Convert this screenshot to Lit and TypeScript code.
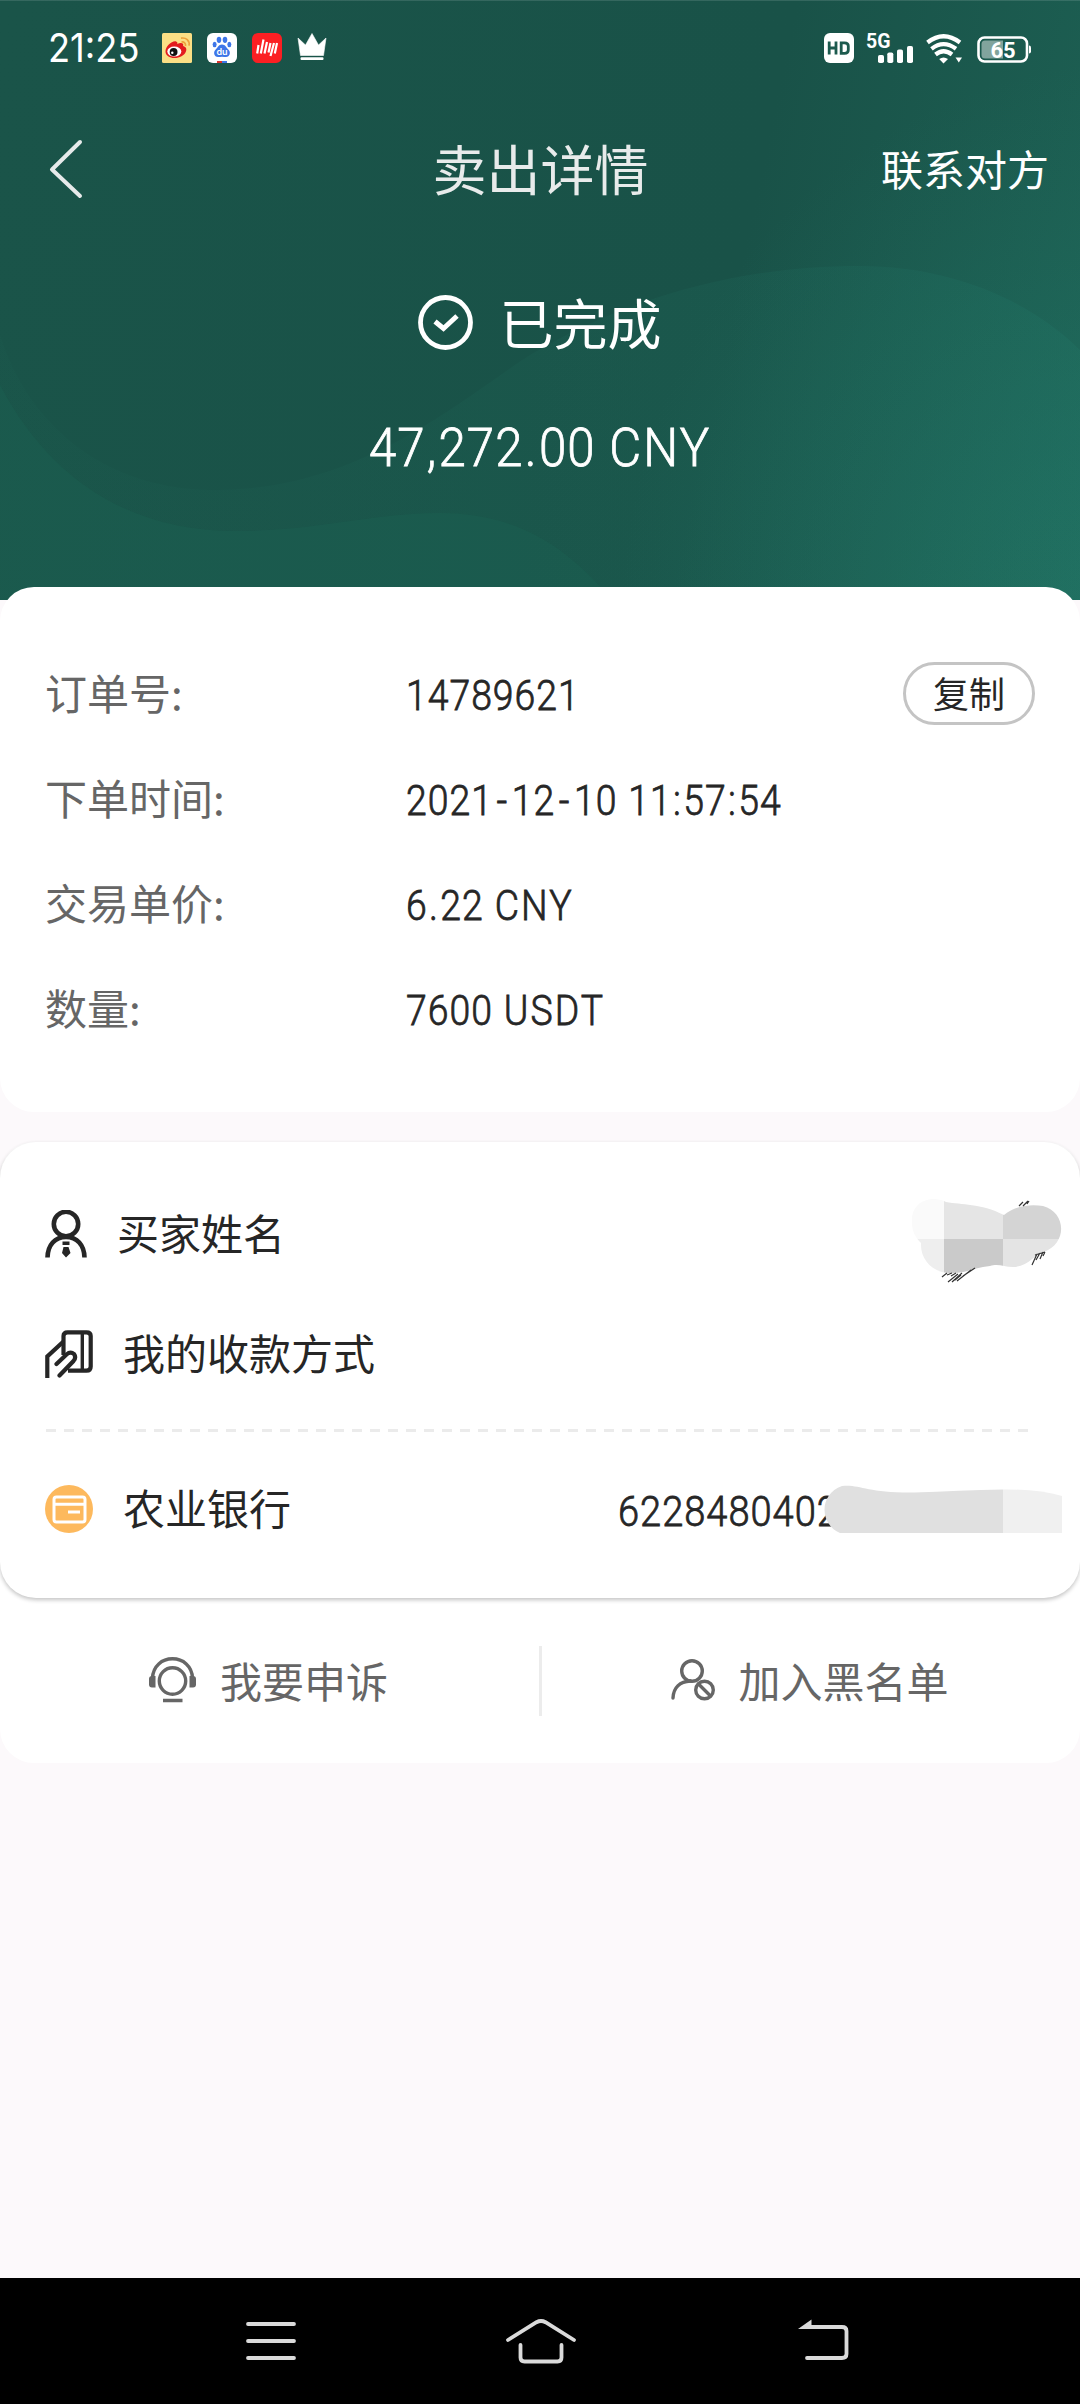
import { LitElement, html, css, svg } from "lit";
import { customElement, property } from "lit/decorators.js";

interface DetailRow {
  label: string;
  value: string;
  copy?: boolean;
}

const ROWS: DetailRow[] = [
  { label: "订单号:", value: "14789621", copy: true },
  { label: "下单时间:", value: "2021-12-10 11:57:54" },
  { label: "交易单价:", value: "6.22 CNY" },
  { label: "数量:", value: "7600 USDT" },
];

@customElement("status-bar")
class StatusBar extends LitElement {
  static styles = css`
    :host { display: block; }
    svg { display: block; flex: none; overflow: visible; }
    .bar {
      display: flex; justify-content: space-between; align-items: center;
      height: 96px; padding: 0 48px 0 48px; box-sizing: border-box;
    }
    .side { display: flex; align-items: center; }
    .apps { display: flex; gap: 15px; margin-left: 21px; }
    .time {
      font: 400 39px/40px Inter, Roboto, sans-serif; color: #fff; width: 93px;
      white-space: nowrap;
    }
    .time-text { display: inline-block; transform: scaleX(0.93); transform-origin: 0 50%; }
    .signal { margin-left: 12px; }
    .wifi { margin-left: 12px; }
    .battery { margin-left: 15px; }
  `;
  render() {
    return html`<div class="bar">
      <div class="side">
        <div class="time"><span class="time-text">21:25</span></div>
        <div class="apps">
          <svg width="30" height="30" viewBox="0 0 30 30">
            <rect width="30" height="30" rx="1.5" fill="#fbdf85" />
            <path d="M3.5 18.5C3.5 13 10 7.5 14 8.4c1.600.4 1.500 1.600 1.300 2.500 2.500-1.400 7-1.700 5.800 2 3.300 1 3.800 3 2.800 5.600C22.500 22.500 17.500 25 12.500 25 7.500 25 3.500 22.400 3.500 18.500Z" fill="#e31b1e" />
            <ellipse cx="12.300" cy="18.600" rx="7" ry="5" fill="#fff" />
            <circle cx="11.600" cy="19" r="3.900" fill="#111" />
            <circle cx="10.300" cy="19.800" r="1.200" fill="#fff" />
            <path d="M19.500 9c2.500-.5 4.500 1.200 4 4M19 5.200c5-1 9 2.500 8 7.500" fill="none" stroke="#eda13a" stroke-width="1.700" />
          </svg>
          <svg width="30" height="30" viewBox="0 0 30 30">
            <rect width="30" height="30" rx="6" fill="#fff" />
            <g fill="#3d76e8">
              <ellipse cx="12" cy="6.800" rx="2.300" ry="3.100" />
              <ellipse cx="18" cy="6.800" rx="2.300" ry="3.100" />
              <ellipse cx="7.600" cy="11.500" rx="2" ry="2.700" />
              <ellipse cx="22.300" cy="11.500" rx="2" ry="2.700" />
              <path d="M15 11.500c3.500 0 4 3 6.500 5.200 2.500 2.300 1.500 7.300-2.500 7.300-1.500 0-2.500-.3-4-.3s-2.500.3-4 .3c-4 0-5-5-2.500-7.300C11 14.500 11.500 11.500 15 11.500Z" />
            </g>
            <text x="15" y="22.300" text-anchor="middle" font-family="Inter,sans-serif" font-weight="600" font-size="9" fill="#fff">du</text>
            <path d="M10 28h5v2h-5z" fill="#d8332d" /><path d="M15 28h5v2h-5z" fill="#3d76e8" />
          </svg>
          <svg width="30" height="30" viewBox="0 0 30 30">
            <rect width="30" height="30" rx="6" fill="#fb1f23" />
            <path d="M6.500 12 5.200 20.500M11.500 6.500 8.800 20.500M15 9 12.500 20.500M18.500 10 16.500 19.500M18.800 19.500h1.500M22 10 18.500 23M25 10 22.800 20.500" stroke="#fff" stroke-width="2.200" fill="none" />
          </svg>
          <svg width="30" height="30" viewBox="0 0 30 30" fill="#fff">
            <path d="M1 5 8.500 12 15 .5 21.500 12 29 5 26.500 22.500h-23Z" stroke="#fff" stroke-width=".6" stroke-linejoin="round" />
            <rect x="3.500" y="24.300" width="23" height="2.800" rx="1" />
          </svg>
        </div>
      </div>
      <div class="side">
        <svg width="30" height="30" viewBox="0 0 30 30">
          <rect width="30" height="30" rx="6" fill="#fff" />
          <path d="M5.200 8.500v13M12 8.500v13M5.200 15H12M17.200 9.800v10.500h3.300q3.800 0 3.800-3.300v-4q0-3.200-3.800-3.200Z" fill="none" stroke="#1c5a4e" stroke-width="2.800" />
        </svg>
        <svg class="signal" width="48" height="30" viewBox="0 0 48 30" fill="#fff">
          <text x="0" y="14.800" font-family="Roboto,sans-serif" font-weight="700" font-size="19.500">5G</text>
          <rect x="12" y="22" width="6" height="8" rx="1.800" /><rect x="21.300" y="19.500" width="6" height="10.500" rx="1.800" />
          <rect x="31" y="16.500" width="6" height="13.500" rx="1.800" /><rect x="41" y="13" width="6" height="17" rx="1.800" />
        </svg>
        <svg class="wifi" width="36" height="30" viewBox="0 0 36 30" fill="none" stroke="#fff" stroke-width="4.200">
          <path d="M1.500 9.500Q17.500-3 34 9.500M5.500 15.800Q17.500 6.500 30 15.800M9.500 21.500Q17.500 15 26 21.500" />
          <path d="M13.200 26Q17.500 22.800 22 26L17.500 30.500Z" fill="#fff" stroke="none" />
          <path d="M29.500 24.500h6.500L32.800 29.500Z" fill="#fff" stroke="none" />
        </svg>
        <svg class="battery" width="55" height="30" viewBox="0 0 55 30">
          <rect x="1.500" y="4.500" width="48.500" height="24" rx="6" fill="none" stroke="#fff" stroke-width="2.600" />
          <path d="M8 7.500h18v18H8q-3.500 0-3.500-3.500V11q0-3.500 3.500-3.500Z" fill="#fff" opacity=".45" />
          <path d="M52 12.500q2 0 2 2v4q0 2-2 2Z" fill="#fff" />
          <text x="26" y="24.500" text-anchor="middle" font-family="Roboto,sans-serif" font-weight="700" font-size="22" fill="#fff">65</text>
        </svg>
      </div>
    </div>`;
  }
}

/** Narrow figures with widened punctuation and capitals. */
@customElement("din-text")
class DinText extends LitElement {
  @property() text = "";
  static styles = css`
    :host { display: block; font-family: Roboto, "Liberation Sans", sans-serif; font-weight: 300; white-space: pre; }
    .t {
      display: inline-block; transform: scaleX(var(--sx, 0.89)); transform-origin: var(--ox, 0) 50%;
      letter-spacing: 1.1px; word-spacing: 1px; -webkit-text-stroke: 0.8px currentColor;
    }
    .hyphen { margin: 0 4px; }
    .dot { margin: 0 1.500px; }
    .caps { letter-spacing: 2.300px; }
  `;
  private piece(p: string) {
    if (p === "-") return html`<span class="hyphen">-</span>`;
    if (/^[:.,]$/.test(p)) return html`<span class="dot">${p}</span>`;
    if (/^[A-Z]+$/.test(p)) return html`<span class="caps">${p}</span>`;
    return p;
  }
  render() {
    return html`<span class="t">${this.text.split(/([-:.,]|[A-Z]+)/).map((p) => this.piece(p))}</span>`;
  }
}

@customElement("app-root")
class AppRoot extends LitElement {
  static styles = css`
    :host {
      display: block; width: 1080px; height: 2404px; overflow: hidden;
      background: #fcf9fb; color: #262626;
      font-family: "Noto Sans CJK SC", "Noto Sans", sans-serif;
    }
    svg { display: block; flex: none; }
    .screen { display: flex; flex-direction: column; height: 2404px; }
    .hero {
      height: 600px; flex: none; color: #fff; position: relative;
      background:
        radial-gradient(ellipse 520px 560px at 1140px 620px, rgba(36, 126, 109, 0.46), rgba(36, 126, 109, 0) 100%),
        linear-gradient(102deg, #1a5449 0%, #195248 66%, #1d6154 100%);
    }
    .waves { position: absolute; inset: 0; }
    .front { position: relative; }
    .nav {
      display: grid; grid-template-columns: 1fr auto 1fr; align-items: center;
      height: 146px; padding: 0 31px 0 48px;
    }
    .title { font-size: 54px; line-height: 60px; color: #e8ebeb; margin-left: -16px; padding-bottom: 2px; }
    .contact { font-size: 42px; line-height: 50px; text-align: right; padding-bottom: 3px; }
    .state { display: flex; justify-content: center; align-items: center; gap: 27px; margin-top: 45px; height: 70px; padding-right: 1px; }
    .state-text { font-size: 54px; line-height: 60px; }
    .amount { text-align: center; font-size: 54px; line-height: 60px; margin-top: 61px; --ox: 50%; --sx: 0.91; }
    .card { background: #fff; flex: none; }
    .info { border-radius: 34px; margin-top: -13px; height: 525px; box-sizing: border-box; padding: 56px 45px 0; position: relative; }
    .row { display: grid; grid-template-columns: 361px 1fr auto; height: 105px; align-items: center; font-size: 42px; line-height: 50px; }
    .label { color: #666; padding-bottom: 7px; }
    .copy {
      border: 3px solid #c4c4c4; border-radius: 32px; width: 132px; height: 63px; box-sizing: border-box;
      font-size: 36px; line-height: 54px; text-align: center; margin-bottom: 4px;
    }
    .pay-wrap { border-radius: 34px; margin-top: 30px; height: 621px; }
    .pay {
      border-radius: 36px; height: 456px; box-sizing: border-box; padding: 32px 18px 0 45px;
      box-shadow: 0 2px 4px rgba(0, 0, 0, 0.24);
    }
    .item { display: flex; align-items: center; height: 120px; font-size: 42px; line-height: 50px; }
    .name { margin-left: 30px; padding-bottom: 4px; }
    .push { margin-left: auto; margin-top: 12px; }
    .dash {
      height: 3px; margin: 15px 34px 0 1px;
      background: repeating-linear-gradient(90deg, #ebebeb 0 10px, transparent 10px 18px);
    }
    .bank { margin-top: 17px; }
    .acct { margin-left: auto; width: 444px; display: flex; align-items: center; }
    .acct-no { width: 206px; flex: none; padding-top: 5px; --sx: 0.905; }
    .cover { position: relative; }
    .actions { display: grid; grid-template-columns: 1fr 3px 1fr; align-items: center; height: 165px; }
    .act { display: flex; align-items: center; color: #666; font-size: 42px; line-height: 50px; padding-bottom: 2px; }
    .first { padding-left: 148px; gap: 23px; }
    .second { padding-left: 129px; gap: 23px; }
    .split { background: #ececec; height: 70px; }
    .sysnav { margin-top: auto; height: 126px; background: #000; flex: none; display: flex; align-items: center; padding: 0 230px 0 245px; }
    .home { margin-left: 208px; }
    .back { margin-left: auto; }
  `;

  private waves() {
    return svg`<svg class="waves" width="1080" height="600" viewBox="0 0 1080 600">
      <defs><linearGradient id="wv" x1="0" y1="0" x2="1" y2="0">
        <stop offset="0" stop-color="#22705f" stop-opacity=".06"/><stop offset=".5" stop-color="#22705f" stop-opacity=".14"/><stop offset="1" stop-color="#238070" stop-opacity=".18"/>
      </linearGradient></defs>
      <path fill="url(#wv)" d="M0 335C30 430 110 490 215 490C360 490 460 400 530 355C620 302 730 266 860 266C950 266 1030 300 1080 350V600H0Z"/>
      <path fill="#1e6e5c" fill-opacity=".2" d="M0 385C50 480 130 531 235 531C320 531 370 513 440 513C520 513 570 550 612 600H0Z"/>
      <path fill="#fff" fill-opacity=".12" d="M0 0H1080V1H0Z"/>
    </svg>`;
  }

  render() {
    return html`<div class="screen">
      <header class="hero">
        ${this.waves()}
        <div class="front">
          <status-bar></status-bar>
          <div class="nav">
            <svg width="36" height="60" viewBox="0 0 36 60"><path d="M32 3 4 30.500 32 57" fill="none" stroke="#e6eaea" stroke-width="4" stroke-linecap="round" stroke-linejoin="round" /></svg>
            <div class="title">卖出详情</div>
            <div class="contact">联系对方</div>
          </div>
          <div class="state">
            <svg width="55" height="55" viewBox="0 0 55 55" fill="none" stroke="#fff"><circle cx="27.500" cy="27.500" r="25" stroke-width="4.800" /><path d="M17 26.500 25.500 33.500 39 21" stroke-width="5" /></svg>
            <div class="state-text">已完成</div>
          </div>
          <din-text class="amount" text="47,272.00 CNY"></din-text>
        </div>
      </header>

      <section class="card info">
        ${ROWS.map(
          (r) => html`<div class="row">
            <div class="label">${r.label}</div>
            <din-text text=${r.value}></din-text>
            ${r.copy ? html`<div class="copy">复制</div>` : ""}
          </div>`
        )}
      </section>

      <section class="card pay-wrap">
        <div class="card pay">
          <div class="item">
            <svg width="42" height="48" viewBox="0 0 42 48" fill="none" stroke="#262626" stroke-width="4.600">
              <circle cx="21" cy="14" r="12.200" />
              <path d="M2.500 47.500C2.800 35 10 27 21 27S39.200 35 39.500 47.500" />
              <path d="M17.500 31.500h7v3.500h-7zM18.500 37h5l2 6-4.500 4.500-4-4.500Z" fill="#262626" stroke="none" />
            </svg>
            <div class="name">买家姓名</div>
            <svg class="push" width="152" height="90" viewBox="0 0 152 90">
              <defs><clipPath id="blob"><path d="M2 22C4 6 22 0 36 7C52 10 70 8 94 20C106 10 122 9 133 11C156 17 158 48 134 57C126 58 118 72 103 72C94 72 88 68 80 71C66 72 54 79 40 78C22 78 10 64 11 48C5 42 1 36 2 22Z" /></clipPath></defs>
              <g clip-path="url(#blob)">
                <rect width="34" height="44" fill="#fafafa" /><rect x="34" width="59" height="44" fill="#e5e5e5" /><rect x="93" width="59" height="44" fill="#d4d4d4" />
                <rect y="44" width="34" height="46" fill="#eeeeee" /><rect x="34" y="44" width="59" height="46" fill="#cacaca" /><rect x="93" y="44" width="59" height="46" fill="#e4e4e4" />
              </g>
              <g stroke="#333" stroke-width="1.200" fill="none">
                <path d="M32 82l5-4M37 80l5-2M41 81l5-3M38 87l10-8M42 87l10-9M47 86l14-11M45 85l6-5M53 81l12-8M109 11l4-4M113 11l5-5M117 9l2-3M122 70l5-11M126 65l4-7M130 64l3-7M133 61l2-4M125 60l10-3" />
              </g>
            </svg>
          </div>
          <div class="item">
            <svg width="48" height="48" viewBox="0 0 48 48" fill="none" stroke="#262626" stroke-width="4.200">
              <path d="M18.500 25V6Q18.500 2.300 22.500 2.300H41.500Q45.700 2.300 45.700 6V36.500Q45.700 40.700 41.500 40.700H23" />
              <path d="M37.300 2V41" stroke-width="3.400" />
              <path d="M2.300 48V26.500L18.500 11.500" />
              <path d="M11.500 34 21.500 24.500Q25.500 21 29 24Q31.500 27.500 28.500 31L14.500 45.500" stroke-linecap="round" />
            </svg>
            <div class="name">我的收款方式</div>
          </div>
          <div class="dash"></div>
          <div class="item bank">
            <svg width="48" height="48" viewBox="0 0 48 48" fill="none" stroke="#fff" stroke-width="3">
              <circle cx="24" cy="24" r="24" fill="#fdb95d" stroke="none" />
              <rect x="9" y="12" width="31" height="25" rx="2.500" /><path d="M9 19.300h31M23 27h12" />
            </svg>
            <div class="name">农业银行</div>
            <div class="acct">
              <din-text class="acct-no" text="6228480402"></din-text>
              <svg class="cover" width="238" height="48" viewBox="0 0 238 48">
                <path d="M16 48C-5 39-5 9 18 1C36-1 42 8 90 7.500C120 7 150 4.500 179 4.500V48Z" fill="#e0e0e0" />
                <path d="M179 4.500Q215 4 238 11V48H179Z" fill="#f0f0f0" />
              </svg>
            </div>
          </div>
        </div>
        <div class="actions">
          <div class="act first">
            <svg width="49" height="46" viewBox="0 0 49 46" fill="none" stroke="#666" stroke-width="3.400">
              <circle cx="24.500" cy="24" r="13.200" /><path d="M4.500 21C5 9 14 1.800 24.500 1.800S44 9 44.500 21M15 43.500h19.500" />
              <path d="M1 22q0-3 3-3h3.500v11.500H4q-3 0-3-3ZM48 22q0-3-3-3h-3.500v11.500H45q3 0 3-3Z" fill="#666" stroke="none" />
            </svg>
            <div>我要申诉</div>
          </div>
          <div class="split"></div>
          <div class="act second">
            <svg width="45" height="42" viewBox="0 0 45 42" fill="none" stroke="#666" stroke-width="3.400">
              <circle cx="21" cy="12" r="10.300" /><path d="M2 39C2.500 28.500 9 22.500 19.500 22" stroke-linecap="round" />
              <circle cx="33.500" cy="31" r="8.800" /><path d="M27.500 25 39.500 37" />
            </svg>
            <div>加入黑名单</div>
          </div>
        </div>
      </section>

      <footer class="sysnav">
        <svg width="52" height="44" viewBox="0 0 52 44" stroke="#dadada" stroke-width="3.800" stroke-linecap="round"><path d="M3 5h46M3 22h46M3 39h46" /></svg>
        <svg class="home" width="72" height="46" viewBox="0 0 72 46" fill="none" stroke="#dadada" stroke-width="3.800" stroke-linecap="round" stroke-linejoin="round">
          <path d="M3 22 31.500 4.200Q36 1.800 40.500 4.200L69 22M15.500 27V39.500Q15.500 43.500 19.500 43.500H52.500Q56.500 43.500 56.500 39.500V27" />
        </svg>
        <svg class="back" width="54" height="44" viewBox="0 0 54 44" fill="none" stroke="#dadada" stroke-width="3.800" stroke-linecap="round">
          <path d="M12 8H46Q50.500 8 50.500 12V35Q50.500 39 46 39H11" />
          <path d="M2 10 15.500.5V10Z" fill="#dadada" stroke="none" />
        </svg>
      </footer>
    </div>`;
  }
}
